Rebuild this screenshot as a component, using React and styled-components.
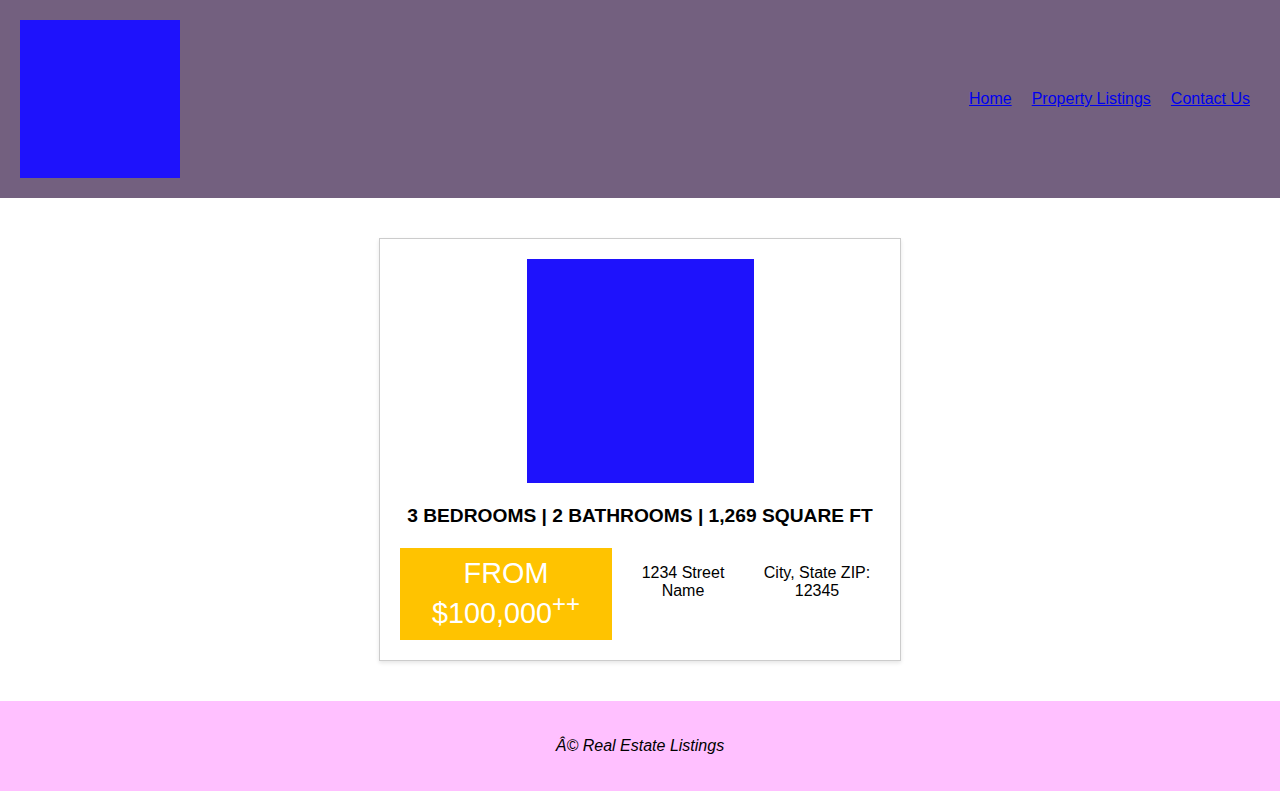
import React from "react";
import styled, { createGlobalStyle } from "styled-components";

const GlobalStyle = createGlobalStyle`
  body {
    margin: 0;
    font-family: "Liberation Sans", Arial, sans-serif;
    font-size: 16px;
    color: #000000;
    background: #ffffff;
  }
`;

const App = () => {
  return (
    <>
      <GlobalStyle />
      <Header>
        <Logo aria-label="logo" />
        <Nav>
          <NavLink href="#">Home</NavLink>
          <NavLink href="#">Property Listings</NavLink>
          <NavLink href="#">Contact Us</NavLink>
        </Nav>
      </Header>
      <Main>
        <Card>
          <Photo aria-label="property" />
          <Features>3 Bedrooms | 2 Bathrooms | 1,269 Square Ft</Features>
          <Details>
            <Price>
              FROM $100,000<sup>++</sup>
            </Price>
            <Address>1234 Street Name</Address>
            <Address>City, State ZIP: 12345</Address>
          </Details>
        </Card>
      </Main>
      <Footer>
        <em>Â© Real Estate Listings</em>
      </Footer>
    </>
  );
};

export default App;

const Header = styled.header`
  display: flex;
  align-items: center;
  justify-content: space-between;
  padding: 20px 30px 20px 20px;
  background: #73607f;
`;

const Logo = styled.div`
  width: 160px;
  height: 158px;
  background: #1e12fc;
`;

const Nav = styled.nav`
  display: flex;
  gap: 20px;
`;

const NavLink = styled.a`
  color: #0000ee;
  text-decoration: underline;
  font-size: 16px;
`;

const Main = styled.main`
  padding: 40px 0;
`;

const Card = styled.section`
  width: 480px;
  margin: 0 auto;
  padding: 20px;
  border: 1px solid #cccccc;
  box-shadow: 0 2px 4px rgba(0, 0, 0, 0.1);
  display: flex;
  flex-direction: column;
  align-items: center;
`;

const Photo = styled.div`
  width: 227px;
  height: 224px;
  background: #1e12fc;
`;

const Features = styled.h3`
  margin: 22px 0 21px;
  font-size: 19.2px;
  font-weight: bold;
  text-transform: uppercase;
  text-align: center;
`;

const Details = styled.div`
  align-self: stretch;
  display: grid;
  grid-template-columns: 212px 1fr 1fr;
  column-gap: 8px;
  align-items: start;
`;

const Price = styled.div`
  background: #ffc300;
  color: #ffffff;
  font-size: 28.8px;
  text-align: center;
  padding: 9px 0 10px;
`;

const Address = styled.p`
  margin: 16px 0;
  text-align: center;
`;

const Footer = styled.footer`
  background: #ffc0ff;
  padding: 36px 0;
  text-align: center;
`;
